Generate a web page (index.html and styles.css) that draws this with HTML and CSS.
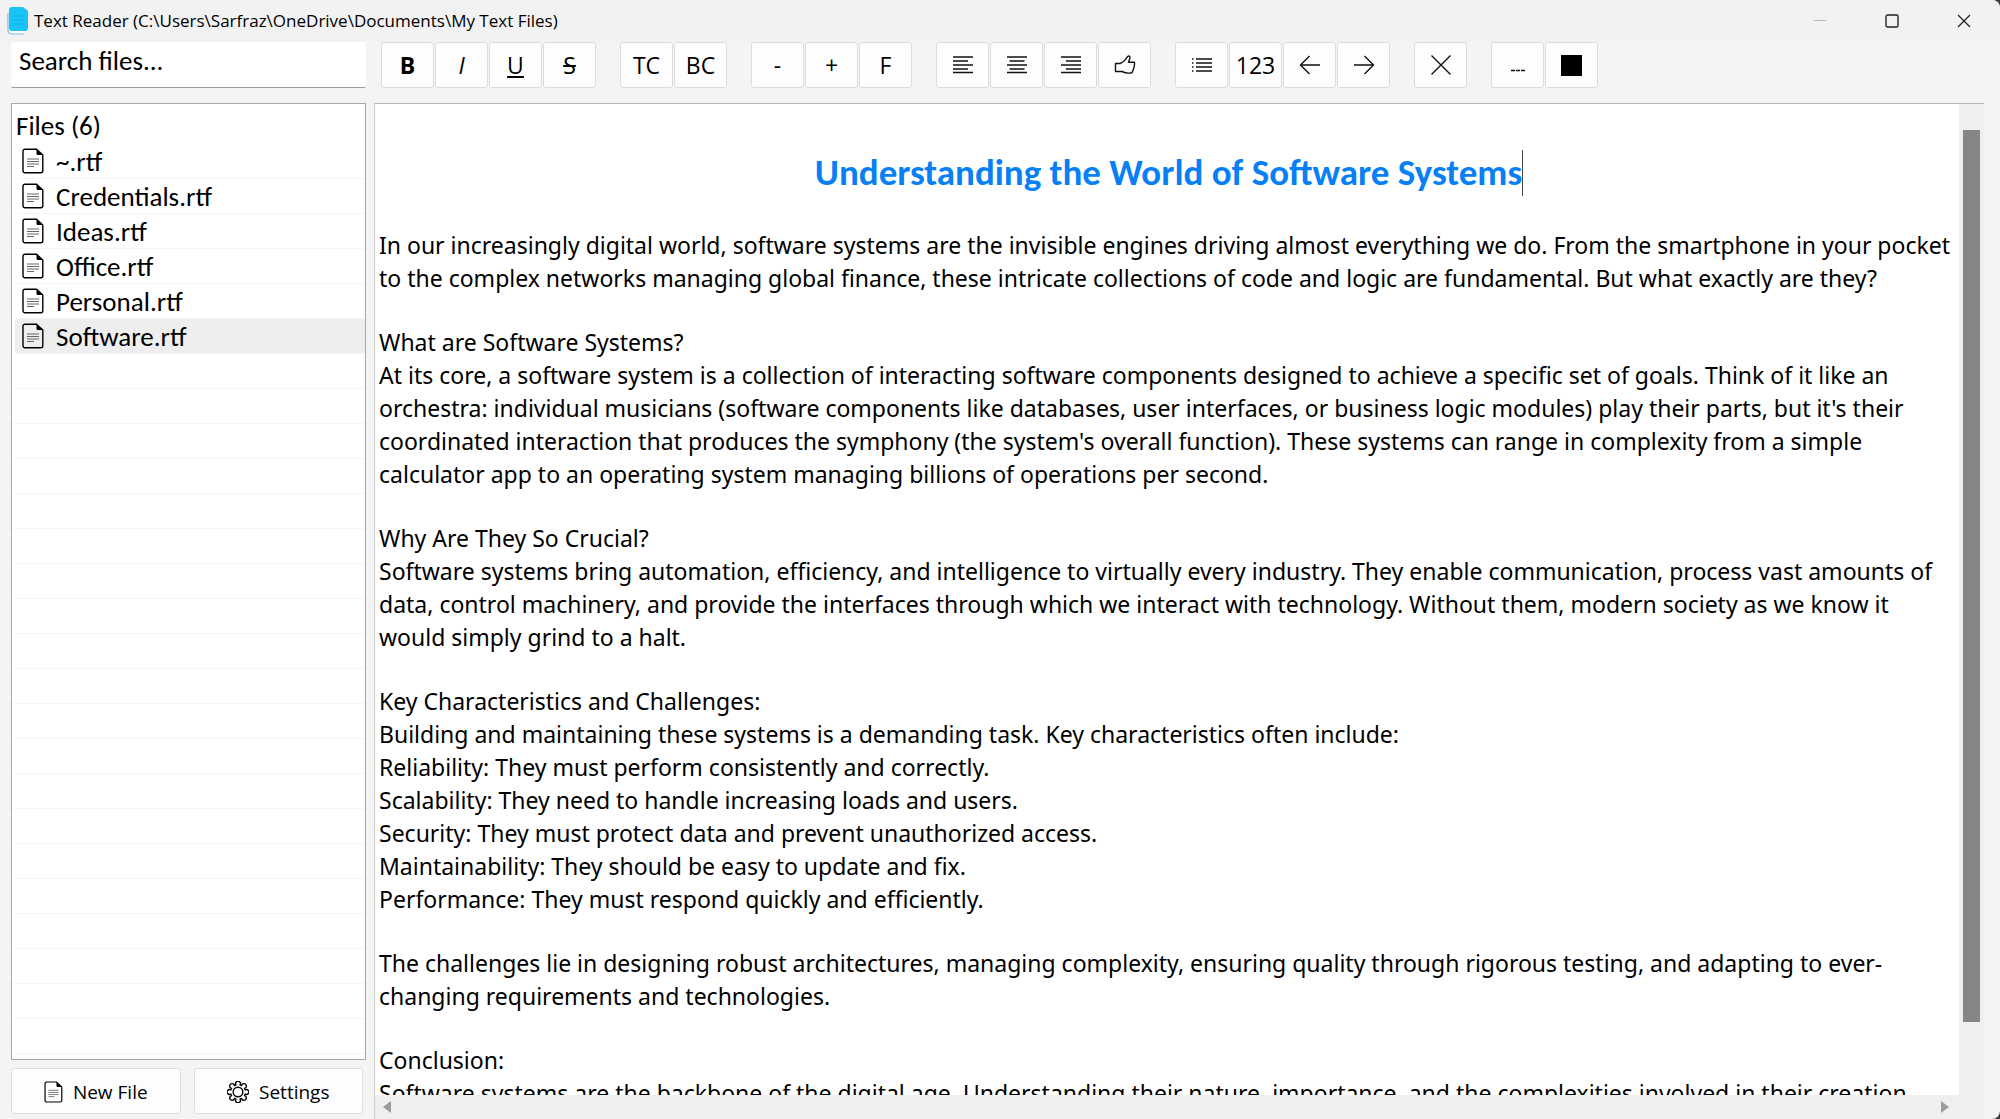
FILE: index.html
```html
<!DOCTYPE html>
<html lang="en">
<head>
<meta charset="utf-8">
<title>Text Reader</title>
<link rel="stylesheet" href="styles.css">
</head>
<body>
<svg class="sprites" aria-hidden="true">
  <symbol id="doc" viewBox="0 0 22 26">
    <path d="M3 1.200h11.500L20.800 7v15.800a2 2 0 0 1-2 2H3a2 2 0 0 1-2-2V3.200a2 2 0 0 1 2-2z" fill="none" stroke="currentColor" stroke-width="1.400"/>
    <path d="M14.500 1l6.500 6h-5a1.500 1.500 0 0 1-1.500-1.500z" fill="currentColor"/>
    <path d="M5 11h12M5 13.500h12M5 16h12M5 18.500h7" stroke="#555" stroke-width=".9" fill="none"/>
  </symbol>
</svg>
<div class="window">
  <header class="titlebar">
    <svg class="app-icon" viewBox="0 0 22 28" aria-hidden="true">
      <path d="M1 6v17a4 4 0 0 0 4 4h12" fill="#fff" stroke="#7fb6dc" stroke-width="1.200"/>
      <path d="M5 0h11l5 4v17a3 3 0 0 1-3 3H5a3 3 0 0 1-3-3V3a3 3 0 0 1 3-3z" fill="#19c3f6"/>
      <path d="M6 9h11M6 13h11M6 17h11" stroke="#0fb2e8" stroke-width="1"/>
    </svg>
    <h1 class="title">Text Reader (C:\Users\Sarfraz\OneDrive\Documents\My Text Files)</h1>
    <div class="window-controls">
      <button type="button" aria-label="Minimize" disabled><svg viewBox="0 0 14 14"><path d="M1 6.500h12" stroke="#b5b5b5"/></svg></button>
      <button type="button" aria-label="Maximize"><svg viewBox="0 0 14 14"><rect x="1" y="1" width="12" height="12" rx="1.500" fill="none" stroke="#222" stroke-width="1.400"/></svg></button>
      <button type="button" aria-label="Close"><svg viewBox="0 0 14 14"><path d="M1 1l12 12M13 1L1 13" stroke="#222" stroke-width="1.300"/></svg></button>
    </div>
  </header>
  <div class="workspace">
    <aside class="sidebar">
      <input class="search" type="text" aria-label="Search files" placeholder="Search files...">
      <nav class="files" aria-label="Files">
        <h2 class="files-title">Files (6)</h2>
        <ul class="file-list">
          <li><a href="#"><svg class="doc"><use href="#doc"/></svg>~.rtf</a></li>
          <li><a href="#"><svg class="doc"><use href="#doc"/></svg>Credentials.rtf</a></li>
          <li><a href="#"><svg class="doc"><use href="#doc"/></svg>Ideas.rtf</a></li>
          <li><a href="#"><svg class="doc"><use href="#doc"/></svg>Office.rtf</a></li>
          <li><a href="#"><svg class="doc"><use href="#doc"/></svg>Personal.rtf</a></li>
          <li><a href="#" class="selected" aria-current="page"><svg class="doc"><use href="#doc"/></svg>Software.rtf</a></li>
        </ul>
        <div class="empty-rows"></div>
      </nav>
      <div class="actions">
        <button type="button"><svg class="doc small"><use href="#doc"/></svg>New File</button>
        <button type="button"><svg class="gear" viewBox="-11 -11 22 22" fill="none" stroke="currentColor" stroke-width="1.400" stroke-linejoin="round"><circle r="4.800"/><path d="M-2-7.200A2.400 2.400 0 1 1 2-7.200L3.600-6.500A2.400 2.400 0 1 1 6.500-3.600L7.200-2A2.400 2.400 0 1 1 7.200 2L6.500 3.600A2.400 2.400 0 1 1 3.600 6.500L2 7.200A2.400 2.400 0 1 1-2 7.200L-3.600 6.500A2.400 2.400 0 1 1-6.500 3.600L-7.200 2A2.400 2.400 0 1 1-7.200-2L-6.500-3.600A2.400 2.400 0 1 1-3.600-6.500Z"/></svg>Settings</button>
      </div>
    </aside>
    <main class="main">
      <div class="toolbar" role="toolbar" aria-label="Formatting">
        <div class="group">
          <button type="button" aria-label="Bold"><b>B</b></button>
          <button type="button" aria-label="Italic"><i>I</i></button>
          <button type="button" aria-label="Underline"><u>U</u></button>
          <button type="button" aria-label="Strikethrough"><s>S</s></button>
        </div>
        <div class="group">
          <button type="button" aria-label="Text color">TC</button>
          <button type="button" aria-label="Background color">BC</button>
        </div>
        <div class="group">
          <button type="button" aria-label="Smaller">-</button>
          <button type="button" aria-label="Larger">+</button>
          <button type="button" aria-label="Font">F</button>
        </div>
        <div class="group">
          <button type="button" aria-label="Align left"><svg viewBox="0 0 22 22"><path d="M1 3h20M1 7h15M1 11h20M1 15h15M1 18.500h20"/></svg></button>
          <button type="button" aria-label="Align center"><svg viewBox="0 0 22 22"><path d="M1 3h20M3.500 7h15M1 11h20M3.500 15h15M1 18.500h20"/></svg></button>
          <button type="button" aria-label="Align right"><svg viewBox="0 0 22 22"><path d="M1 3h20M6 7h15M1 11h20M6 15h15M1 18.500h20"/></svg></button>
          <button type="button" aria-label="Like"><svg viewBox="0 0 22 22"><path d="M1.500 9.500h4.500c3.500-1.500 6-4 7.500-7 2.500-1.500 3 .5 2 3l-1 2.700h6c.5 3.800-1 7.300-2.500 10.600-3.500.6-7 .2-10-1.300H1.500z"/></svg></button>
        </div>
        <div class="group">
          <button type="button" aria-label="Bulleted list"><svg viewBox="0 0 22 22"><path d="M5 5h16M5 9h16M5 13h16M5 17h16"/><path d="M1 5h1.500M1 9h1.500M1 13h1.500M1 17h1.500"/></svg></button>
          <button type="button" aria-label="Numbered list">123</button>
          <button type="button" aria-label="Outdent"><svg viewBox="0 0 22 22"><path d="M21 11H1.500M10.500 2l-9 9 9 9"/></svg></button>
          <button type="button" aria-label="Indent"><svg viewBox="0 0 22 22"><path d="M1 11h19.500M11.500 2l9 9-9 9"/></svg></button>
        </div>
        <div class="group">
          <button type="button" aria-label="Clear formatting"><svg viewBox="0 0 22 22"><path d="M1.500 1.500l19 19M20.500 1.500l-19 19"/></svg></button>
        </div>
        <div class="group">
          <button type="button" aria-label="Horizontal line"><svg viewBox="0 0 22 22"><path d="M4 16.500h4M9 16.500h4M14 16.500h4"/></svg></button>
          <button type="button" aria-label="Dark mode"><span class="swatch"></span></button>
        </div>
      </div>
      <div class="editor">
        <div class="document" role="textbox" aria-multiline="true" aria-label="Document" contenteditable="true" spellcheck="false">
          <h2><span class="caret">Understanding the World of Software Systems</span></h2>
          <p>In our increasingly digital world, software systems are the invisible engines driving almost everything we do. From the smartphone in your pocket<br>to the complex networks managing global finance, these intricate collections of code and logic are fundamental. But what exactly are they?</p>
          <p>What are Software Systems?<br>At its core, a software system is a collection of interacting software components designed to achieve a specific set of goals. Think of it like an<br>orchestra: individual musicians (software components like databases, user interfaces, or business logic modules) play their parts, but it's their<br>coordinated interaction that produces the symphony (the system's overall function). These systems can range in complexity from a simple<br>calculator app to an operating system managing billions of operations per second.</p>
          <p>Why Are They So Crucial?<br>Software systems bring automation, efficiency, and intelligence to virtually every industry. They enable communication, process vast amounts of<br>data, control machinery, and provide the interfaces through which we interact with technology. Without them, modern society as we know it<br>would simply grind to a halt.</p>
          <p>Key Characteristics and Challenges:<br>Building and maintaining these systems is a demanding task. Key characteristics often include:<br>Reliability: They must perform consistently and correctly.<br>Scalability: They need to handle increasing loads and users.<br>Security: They must protect data and prevent unauthorized access.<br>Maintainability: They should be easy to update and fix.<br>Performance: They must respond quickly and efficiently.</p>
          <p>The challenges lie in designing robust architectures, managing complexity, ensuring quality through rigorous testing, and adapting to ever-<br>changing requirements and technologies.</p>
          <p>Conclusion:<br>Software systems are the backbone of the digital age. Understanding their nature, importance, and the complexities involved in their creation</p>
        </div>
        <div class="vscroll"><div class="thumb"></div></div>
        <div class="hscroll">
          <svg viewBox="0 0 8 12"><path d="M8 0v12L0 6z"/></svg>
          <svg viewBox="0 0 8 12"><path d="M0 0v12l8-6z"/></svg>
        </div>
      </div>
    </main>
  </div>
</div>
</body>
</html>
```
FILE: styles.css
```css
* { box-sizing: border-box; }

body {
  margin: 0;
  font-family: "Noto Sans", sans-serif;
  font-size: 23px;
  color: #000;
  background: #3c3c3c;
}

button, input { font: inherit; color: inherit; margin: 0; }
h1, h2, p, ul { margin: 0; padding: 0; font-weight: 400; }

.sprites { position: absolute; width: 0; height: 0; }

.window {
  display: flex;
  flex-direction: column;
  height: 100vh;
  overflow: hidden;
  background: #f4f4f4;
  border-radius: 0 8px 8px 0;
}

.titlebar {
  display: flex;
  flex: none;
  align-items: center;
  height: 42px;
  padding-left: 7px;
  background: #f2f2f2;
}
.app-icon { width: 22px; height: 28px; margin-right: 5px; }
.title { flex: 1; font-family: "Open Sans", sans-serif; font-size: 17px; line-height: 40px; }
.window-controls { display: flex; }
.window-controls button {
  display: grid;
  place-items: center;
  width: 72px;
  height: 40px;
  padding: 0;
  border: 0;
  background: none;
}
.window-controls svg { width: 14px; height: 14px; }

.workspace {
  display: grid;
  flex: 1;
  grid-template-columns: 355px 1fr;
  gap: 8px;
  min-height: 0;
  padding: 0 16px 0 11px;
}

.sidebar {
  display: flex;
  flex-direction: column;
  min-height: 0;
  font-family: Carlito, "Noto Sans", sans-serif;
  font-size: 27px;
}
.search {
  height: 46px;
  margin-bottom: 15px;
  padding: 0 8px 8px;
  border: 0;
  border-bottom: 1px solid #9a9a9a;
  border-radius: 2px;
  background: #fff;
}
.search::placeholder { color: #000; opacity: 1; }

.files {
  display: flex;
  flex: 1;
  flex-direction: column;
  min-height: 0;
  border: 1px solid #a8a8a8;
  background: #fff;
}
.files-title { height: 40px; padding-left: 4px; font-size: 27px; line-height: 44px; }
.file-list { list-style: none; }
.file-list a {
  display: flex;
  align-items: center;
  gap: 12px;
  height: 35px;
  margin-left: 3px;
  padding-left: 7px;
  border-bottom: 1px solid #f6f6f6;
  color: inherit;
  text-decoration: none;
}
.file-list .selected { background: #eee; }
.doc { width: 22px; height: 26px; }
.doc.small { width: 19px; height: 22px; }
.empty-rows {
  flex: 1;
  background: repeating-linear-gradient(#fff 0 34px, #f6f6f6 34px 35px);
}

.actions {
  display: grid;
  grid-template-columns: 1fr 1fr;
  gap: 13px;
  padding: 8px 3px 5px 0;
}
.actions button {
  display: flex;
  align-items: center;
  justify-content: center;
  gap: 10px;
  height: 46px;
  padding: 2px 0 0;
  border: 1px solid #dedede;
  border-radius: 3px;
  background: #fdfdfd;
  font-family: "Open Sans", sans-serif;
  font-size: 19px;
}
.gear { width: 22px; height: 22px; }

.main { display: flex; flex-direction: column; min-width: 0; min-height: 0; }
.toolbar { display: flex; gap: 24px; height: 61px; padding-left: 7px; font-family: "Open Sans", sans-serif; }
.group { display: flex; gap: 1px; }
.toolbar button {
  display: grid;
  place-items: center;
  width: 53px;
  height: 46px;
  padding: 0;
  border: 1px solid #dcdcdc;
  border-radius: 3px;
  background: #fdfdfd;
}
.toolbar svg {
  width: 22px;
  height: 22px;
  fill: none;
  stroke: #111;
  stroke-width: 1.4;
  stroke-linejoin: round;
}
.swatch { width: 21px; height: 21px; background: #000; }

.editor {
  display: grid;
  flex: 1;
  grid-template-columns: 1fr 25px;
  grid-template-rows: 1fr 24px;
  min-height: 0;
  border-top: 1px solid #b8b8b8;
  border-left: 1px solid #cfcfcf;
}
.document {
  min-width: 0;
  overflow: hidden;
  padding: 46px 0 0 4px;
  background: #fff;
  line-height: 33px;
  white-space: nowrap;
  outline: none;
}
.document h2 {
  margin-bottom: 33px;
  color: #077ff5;
  font-family: Carlito, "Noto Sans", sans-serif;
  font-size: 37px;
  font-weight: 700;
  line-height: 46px;
  text-align: center;
}
.caret { display: inline-block; border-right: 1px solid #444; }
.document p { margin-bottom: 31px; }

.vscroll { grid-row: 1 / 3; grid-column: 2; padding: 26px 4px 97px; background: #efefef; }
.thumb { height: 100%; background: #858585; }
.hscroll {
  display: flex;
  align-items: center;
  justify-content: space-between;
  padding: 0 10px 0 8px;
  background: #efefef;
}
.hscroll svg { width: 8px; height: 12px; fill: #9c9c9c; }
```
